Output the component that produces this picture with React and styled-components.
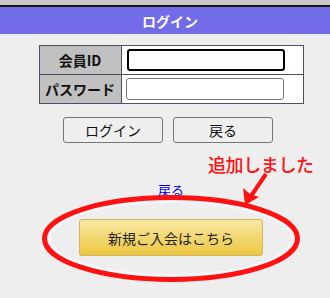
import React from 'react';
import styled, { createGlobalStyle } from 'styled-components';

const GlobalStyle = createGlobalStyle`
  body {
    margin: 0;
    background: #eeeeee;
    font-family: "Noto Sans CJK JP", "Noto Sans", sans-serif;
  }
`;

const Page = styled.div`
  position: relative;
  width: 330px;
  height: 298px;
  overflow: hidden;
  background: #eeeeee;
`;

const TopStrip = styled.div`
  height: 5px;
  background: #c9c9c9;
  border-bottom: 2px solid #151515;
`;

const Header = styled.div`
  height: 27px;
  background: #746be8;
  color: #fff;
  font-weight: bold;
  font-size: 14px;
  display: flex;
  align-items: center;
  justify-content: center;
  padding-left: 10px;
`;

const Main = styled.div`
  display: flex;
  flex-direction: column;
  align-items: center;
  padding-left: 12px;
`;

const LoginTable = styled.table`
  margin-top: 11px;
  border-collapse: collapse;
  border: 1px solid #4a5161;
`;

const LabelCell = styled.th`
  width: 81px;
  height: 28px;
  padding: 0;
  background: #c0c0c0;
  border: 1px solid #4a5161;
  font-size: 14px;
  font-weight: bold;
  color: #111;
  text-align: center;
`;

const InputCell = styled.td`
  width: 177px;
  padding: 0 0 0 4px;
  background: #fff;
  border: 1px solid #4a5161;
`;

const TextInput = styled.input`
  box-sizing: border-box;
  display: block;
  width: 158px;
  height: 22px;
  margin: ${(p) => (p.$focused ? '0 0 0 1px' : '0')};
  border: ${(p) => (p.$focused ? '2px solid #000' : '1px solid #767676')};
  border-radius: 3px;
  background: #fff;
  outline: none;
  font-size: 13px;
`;

const ButtonRow = styled.div`
  display: flex;
  gap: 10px;
  margin-top: 13px;
  margin-right: 6px;
`;

const PlainButton = styled.button`
  width: 100px;
  height: 26px;
  background: #efefef;
  border: 1px solid #767676;
  border-radius: 3px;
  font-family: inherit;
  font-size: 14px;
  color: #111;
  padding: 0;
`;

const BackLink = styled.a`
  margin-top: 37px;
  font-size: 13px;
  line-height: 19px;
  color: #0000ee;
  text-decoration: underline;
`;

const SignupButton = styled.button`
  margin-top: 20px;
  width: 184px;
  height: 37px;
  border: 1px solid #d3b463;
  border-radius: 3px;
  background: linear-gradient(to bottom, #f8e8a2, #edc741);
  font-family: inherit;
  font-size: 14px;
  color: #222;
  padding: 0;
`;

const Overlay = styled.svg`
  position: absolute;
  left: 0;
  top: 0;
  pointer-events: none;
`;

const Note = styled.div`
  position: absolute;
  left: 208px;
  top: 151px;
  font-size: 18px;
  font-weight: 500;
  line-height: 26px;
  color: #ff1111;
  letter-spacing: -0.4px;
`;

export default function App() {
  return (
    <>
      <GlobalStyle />
      <Page>
        <TopStrip />
        <Header>ログイン</Header>
        <Main>
          <LoginTable>
            <tbody>
              <tr>
                <LabelCell>会員ID</LabelCell>
                <InputCell>
                  <TextInput $focused type="text" />
                </InputCell>
              </tr>
              <tr>
                <LabelCell>パスワード</LabelCell>
                <InputCell>
                  <TextInput type="password" />
                </InputCell>
              </tr>
            </tbody>
          </LoginTable>
          <ButtonRow>
            <PlainButton>ログイン</PlainButton>
            <PlainButton>戻る</PlainButton>
          </ButtonRow>
          <BackLink href="#">戻る</BackLink>
          <SignupButton>新規ご入会はこちら</SignupButton>
        </Main>
        <Overlay width="330" height="298" viewBox="0 0 330 298">
          <ellipse cx="171" cy="238.5" rx="121.5" ry="37" fill="none" stroke="#f6f6fb" strokeWidth="3" />
          <ellipse cx="171" cy="238.5" rx="126.5" ry="41" fill="none" stroke="#ff1111" strokeWidth="5" />
          <line x1="266" y1="174" x2="251" y2="196" stroke="#ff1111" strokeWidth="4" />
          <polygon points="245,205 243,188 250,194 259,197" fill="#ff1111" />
        </Overlay>
        <Note>追加しました</Note>
      </Page>
    </>
  );
}
